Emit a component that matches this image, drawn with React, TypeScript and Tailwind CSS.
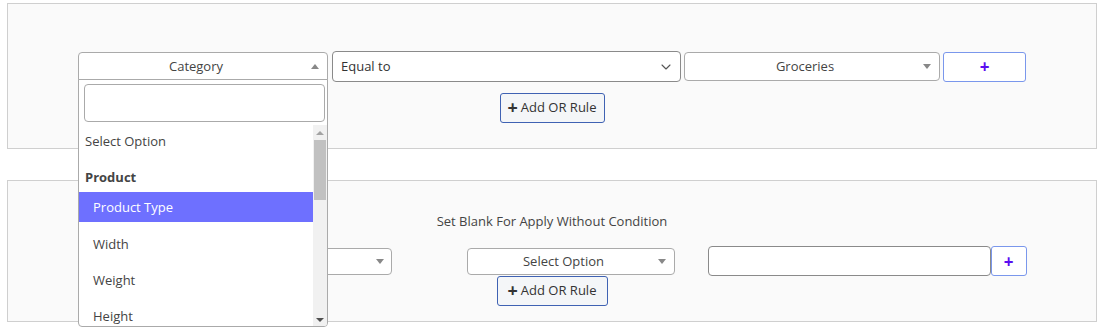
import { ChevronDown } from "lucide-react";

const font = { fontFamily: '"Open Sans", "Noto Sans", sans-serif' };

const Caret = ({ up = false }: { up?: boolean }) => (
  <span
    className={`w-0 h-0 border-x-[4px] border-x-transparent ${
      up ? "border-b-[5px] border-b-[#888]" : "border-t-[5px] border-t-[#888]"
    }`}
  />
);

const PlusButton = ({ className }: { className: string }) => (
  <button
    className={`${className} flex items-center justify-center bg-white border border-[#7a97ec] rounded-[3px] text-[#5a0ef0] text-[17px] font-bold leading-none`}
  >
    +
  </button>
);

const AddOrRule = ({ className }: { className: string }) => (
  <button
    className={`${className} flex items-center justify-center gap-[3px] bg-[#f4f6f8] border border-[#3f62b3] rounded-[3px] text-[#333] text-[13px]`}
  >
    <span className="text-[18px] font-bold leading-none -mt-[2px]">+</span>
    Add OR Rule
  </button>
);

const CategoryDropdown = () => (
  <div className="relative w-[250px] h-[29px]">
    <div className="h-full border border-[#aaa] rounded-t-[4px] bg-white flex items-center">
      <span className="flex-1 text-center text-[#444] text-[13px] pl-[6px]">Category</span>
      <span className="w-[20px] flex justify-center pr-[4px]">
        <Caret up />
      </span>
    </div>
    <div className="absolute left-0 top-[27px] w-[250px] h-[248px] border border-[#aaa] rounded-b-[4px] bg-white overflow-hidden z-10">
      <div className="px-[5px] pt-[4px] pr-[2px]">
        <div className="h-[38px] border border-[#aaa] rounded-[4px]" />
      </div>
      <div className="flex mt-[3px] h-[202px]">
        <div className="flex-1 text-[13px] text-[#444]">
          <div className="h-[33px] flex items-center pt-[1px] pl-[6px]">Select Option</div>
          <div className="h-[34px] flex items-center pt-[5px] pl-[6px] font-bold">Product</div>
          <div className="h-[30px] flex items-center pt-[1px] pl-[14px] bg-[#6e70ff] text-white">Product Type</div>
          <div className="h-[36px] flex items-center pt-[9px] pl-[14px]">Width</div>
          <div className="h-[36px] flex items-center pt-[9px] pl-[14px]">Weight</div>
          <div className="h-[36px] flex items-center pt-[9px] pl-[14px]">Height</div>
        </div>
        <div className="w-[14px] bg-[#f1f1f1] flex flex-col items-center">
          <div className="h-[15px] flex items-center">
            <span className="w-0 h-0 border-x-[4px] border-x-transparent border-b-[4px] border-b-[#a3a3a3]" />
          </div>
          <div className="w-[12px] h-[60px] bg-[#c1c1c1]" />
          <div className="flex-1" />
          <div className="h-[15px] flex items-center">
            <span className="w-0 h-0 border-x-[4px] border-x-transparent border-t-[4px] border-t-[#505050]" />
          </div>
        </div>
      </div>
    </div>
  </div>
);

export default function App() {
  return (
    <div className="w-[1102px] h-[330px] bg-white pt-[3px]" style={font}>
      <div className="ml-[7px] w-[1090px] h-[146px] border border-[#cfcfcf] bg-[#fafafa] pt-[47px] flex flex-col items-center">
        <div className="flex items-center">
          <CategoryDropdown />
          <div className="ml-[4px] w-[349px] h-[31px] border border-[#8a8a8a] rounded-[4px] bg-white flex items-center pl-[8px] pr-[6px] text-[13px] text-[#333]">
            <span className="flex-1">Equal to</span>
            <ChevronDown size={16} strokeWidth={1.6} className="text-[#555]" />
          </div>
          <div className="ml-[3px] w-[256px] h-[29px] border border-[#aaa] rounded-[4px] bg-white flex items-center">
            <span className="flex-1 text-center text-[13px] text-[#444] pl-[6px]">Groceries</span>
            <span className="w-[20px] flex justify-center pr-[4px]">
              <Caret />
            </span>
          </div>
          <PlusButton className="ml-[3px] w-[83px] h-[30px]" />
        </div>
        <AddOrRule className="mt-[11px] w-[105px] h-[30px]" />
      </div>

      <div className="ml-[7px] w-[1090px] mt-[31px] h-[142px] border border-[#cfcfcf] bg-[#fafafa] pt-[31px] flex flex-col items-center">
        <div className="text-[13px] text-[#444] leading-[18px]">Set Blank For Apply Without Condition</div>
        <div className="mt-[16px] flex items-start">
          <div className="mt-[2px] w-[314px] h-[27px] border border-[#aaa] rounded-[4px] bg-white flex items-center justify-end pr-[7px]">
            <Caret />
          </div>
          <div className="mt-[2px] ml-[75px] w-[208px] h-[27px] border border-[#aaa] rounded-[4px] bg-white flex items-center">
            <span className="flex-1 text-center text-[13px] text-[#444] pl-[6px] pt-[1px]">Select Option</span>
            <span className="w-[20px] flex justify-center pr-[4px]">
              <Caret />
            </span>
          </div>
          <div className="ml-[33px] w-[283px] h-[30px] border border-[#8a8a8a] rounded-[4px] bg-white" />
          <PlusButton className="w-[36px] h-[30px]" />
        </div>
        <AddOrRule className="mt-0 w-[111px] h-[30px]" />
      </div>
    </div>
  );
}
